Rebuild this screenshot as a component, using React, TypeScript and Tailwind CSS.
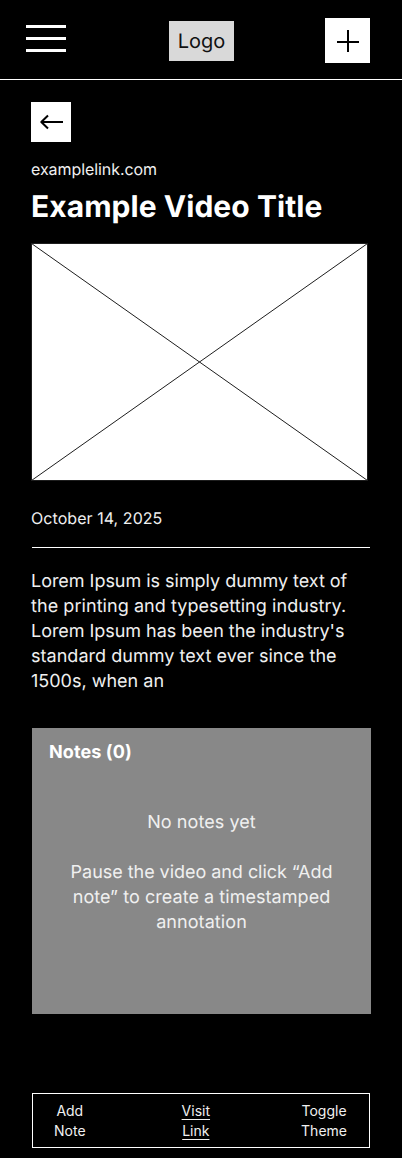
import type { ReactNode } from "react";

function Header() {
  return (
    <header className="flex h-20 items-start justify-between border-b border-white pr-8 pl-[26px]">
      <button aria-label="Menu" className="mt-[25px] flex w-10 flex-col gap-[9px]">
        <span className="h-[3px] w-full bg-white" />
        <span className="h-[3px] w-full bg-white" />
        <span className="h-[3px] w-full bg-white" />
      </button>
      <div className="mt-[21px] ml-[12px] flex h-10 w-[65px] items-center justify-center bg-[#d9d9d9] text-[20px] text-[#111]">
        Logo
      </div>
      <button aria-label="Add" className="mt-[18px] flex h-[45px] w-[45px] items-center justify-center bg-white">
        <svg className="mt-px ml-px" width="22" height="22" viewBox="0 0 22 22" stroke="#000" strokeWidth="2">
          <path d="M11 0v22M0 12h22" />
        </svg>
      </button>
    </header>
  );
}

function Action({ children, className }: { children: ReactNode; className: string }) {
  return <button className={"text-center text-[14px] leading-5 " + className}>{children}</button>;
}

export default function App() {
  return (
    <div className="h-[1158px] w-[402px] overflow-hidden bg-black font-['Inter',sans-serif] text-[#f0f0f0] antialiased [text-rendering:geometricPrecision]">
      <Header />
      <main className="px-[31px]">
        <button aria-label="Back" className="mt-[22px] flex h-10 w-10 items-center justify-center bg-white">
          <svg width="24" height="16" viewBox="0 0 24 16" fill="none" stroke="#000" strokeWidth="2" strokeLinejoin="round">
            <path d="M24 8H2M9 1.5L2.3 8L9 14.5" />
          </svg>
        </button>
        <p className="mt-[17px] text-[16px] leading-5 tracking-[-0.07px]">examplelink.com</p>
        <h1 className="mt-[9px] text-[30px] leading-[38px] font-bold tracking-[0.05px] whitespace-nowrap text-white">Example Video Title</h1>
        <svg className="mt-[17px] block" width="337" height="238" viewBox="0 0 337 238">
          <rect x="0.5" y="0.5" width="336" height="237" fill="#fff" stroke="#1e1e1e" />
          <path d="M0.5 0.5l336 237M336.5 0.5L0.5 237.5" stroke="#1e1e1e" />
        </svg>
        <p className="mt-[27px] text-[16px] leading-5 tracking-[0.06px]">October 14, 2025</p>
        <hr className="mt-[19px] ml-px w-[338px] border-white" />
        <p className="mt-[21px] text-[18px] leading-[25px]">
          <span className="tracking-[-0.03px]">Lorem Ipsum is simply dummy text of</span>
          <br />
          <span className="tracking-[0.06px]">the printing and typesetting industry.</span>
          <br />
          <span className="tracking-[-0.04px]">Lorem Ipsum has been the industry's</span>
          <br />
          <span className="tracking-[0.03px]">standard dummy text ever since the</span>
          <br />
          1500s, when an
        </p>
        <section className="mt-[34px] ml-px h-[286px] w-[339px] bg-[#888888] pt-[12px]">
          <h2 className="pl-[17px] text-[18px] leading-[25px] font-bold tracking-[0.1px] text-white">Notes (0)</h2>
          <p className="mt-[45px] text-center text-[18px] leading-[25px] tracking-[0.07px]">No notes yet</p>
          <p className="mt-[25px] text-center text-[18px] leading-[25px]">
            <span className="tracking-[-0.04px]">Pause the video and click “Add</span>
            <br />
            <span className="tracking-[0.05px]">note” to create a timestamped</span>
            <br />
            <span className="tracking-[0.08px]">annotation</span>
          </p>
        </section>
      </main>
      <footer className="mt-[79px] ml-8 flex h-[55px] w-[338px] items-center justify-between border border-white pr-[22px] pl-[21px]">
        <Action className="">Add<br />Note</Action>
        <Action className="ml-[5px] underline underline-offset-[3px] [text-decoration-skip-ink:none]">Visit<br />Link</Action>
        <Action className="">Toggle<br />Theme</Action>
      </footer>
    </div>
  );
}
